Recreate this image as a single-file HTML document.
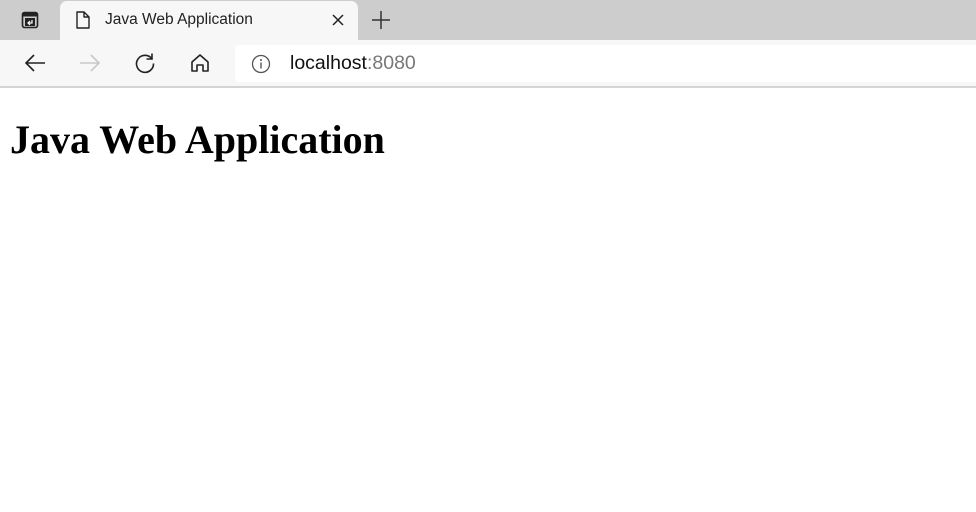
<!DOCTYPE html>
<html><head><style>
body{margin:0;width:976px;height:512px;background:#fff;overflow:hidden;font-family:"Liberation Sans",sans-serif;position:relative}
.tabbar{position:absolute;left:0;top:0;width:976px;height:40px;background:#cdcdcd}
.tab{position:absolute;left:60px;top:1px;width:298px;height:39px;background:#f7f7f7;border-radius:7px 7px 0 0}
.toolbar{position:absolute;left:0;top:40px;width:976px;height:46px;background:#f7f7f7;border-bottom:2px solid #d4d4d4}
.addr{position:absolute;left:235px;top:5px;width:741px;height:37px;background:#fff;border-radius:4px 0 0 4px}
.t{position:absolute;font-size:15px;color:#222}
h1{position:absolute;left:10px;top:116px;margin:0;font-family:"Liberation Serif",serif;font-size:40px;font-weight:bold;color:#000;white-space:nowrap}
</style></head><body>
<div class="tabbar">
<svg style="position:absolute;left:21px;top:11px" width="18" height="18" viewBox="0 0 18 18"><rect x="1.5" y="1.5" width="15" height="15" rx="2" fill="none" stroke="#222" stroke-width="1.6"/><rect x="1.5" y="1.5" width="15" height="4" fill="#222"/><rect x="4" y="7" width="10" height="8" fill="#222"/><path d="M11 9v3H7m2-2l-2 2 2 2" stroke="#fff" stroke-width="1.2" fill="none"/></svg>
<div class="tab">
<svg style="position:absolute;left:15px;top:9px" width="16" height="20" viewBox="0 0 16 20"><path d="M2 2h7l5 5v11H2z M9 2v5h5" fill="none" stroke="#222" stroke-width="1.4" stroke-linejoin="round"/></svg>
<div class="t" style="left:45px;top:10px;font-size:15.5px">Java Web Application</div>
<svg style="position:absolute;left:272px;top:13px" width="12" height="12" viewBox="0 0 12 12"><path d="M1 1l10 10M11 1L1 11" stroke="#222" stroke-width="1.5"/></svg>
</div>
<svg style="position:absolute;left:371px;top:10px" width="20" height="20" viewBox="0 0 20 20"><path d="M10 1v18M1 10h18" stroke="#333" stroke-width="1.5"/></svg>
</div>
<div class="toolbar">
<svg style="position:absolute;left:24px;top:13px" width="22" height="20" viewBox="0 0 22 20"><path d="M21 10H2M10 2L2 10l8 8" fill="none" stroke="#222" stroke-width="1.6"/></svg>
<svg style="position:absolute;left:79px;top:13px" width="22" height="20" viewBox="0 0 22 20"><path d="M1 10h19M12 2l8 8-8 8" fill="none" stroke="#c8c8c8" stroke-width="1.6"/></svg>
<svg style="position:absolute;left:134px;top:12px" width="22" height="22" viewBox="0 0 22 22"><path d="M18 7A8.5 8.5 0 1 0 19.5 11.5M18 1.5V7h-5.5" fill="none" stroke="#222" stroke-width="1.6"/></svg>
<svg style="position:absolute;left:190px;top:13px" width="20" height="20" viewBox="0 0 20 20"><path d="M2 9L10 2l8 7v9h-5v-6H7v6H2z" fill="none" stroke="#222" stroke-width="1.6" stroke-linejoin="round"/></svg>
<div class="addr">
<svg style="position:absolute;left:16px;top:9px" width="20" height="20" viewBox="0 0 20 20"><circle cx="10" cy="10" r="8.5" fill="none" stroke="#555" stroke-width="1.3"/><path d="M10 8.5v6" stroke="#555" stroke-width="1.4"/><circle cx="10" cy="6" r="1" fill="#555"/></svg>
<div class="t" style="left:55px;top:7px;font-size:19.5px;color:#111">localhost<span style="color:#777">:8080</span></div>
</div>
</div>
<h1>Java Web Application</h1>
</body></html>
